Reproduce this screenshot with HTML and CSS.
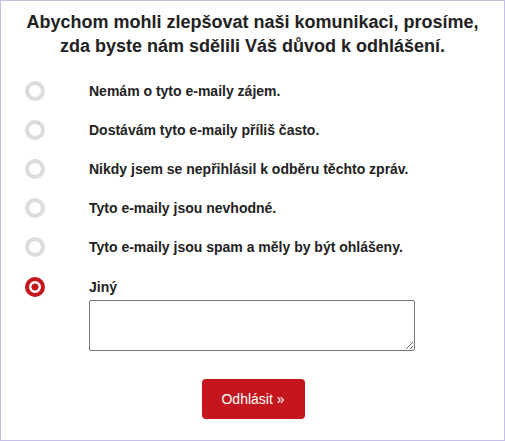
FILE: index.html
```html
<!DOCTYPE html>
<html lang="cs">
<head>
<meta charset="utf-8">
<link rel="stylesheet" href="styles.css">
</head>
<body>
<div class="frame">
  <h1 class="title">Abychom mohli zlepšovat naši komunikaci, prosíme, zda byste nám sdělili Váš důvod k odhlášení.</h1>
  <ul class="options">
    <li class="option"><span class="radio"></span><span class="label">Nemám o tyto e-maily zájem.</span></li>
    <li class="option"><span class="radio"></span><span class="label">Dostávám tyto e-maily příliš často.</span></li>
    <li class="option"><span class="radio"></span><span class="label">Nikdy jsem se nepřihlásil k odběru těchto zpráv.</span></li>
    <li class="option"><span class="radio"></span><span class="label">Tyto e-maily jsou nevhodné.</span></li>
    <li class="option"><span class="radio"></span><span class="label">Tyto e-maily jsou spam a měly by být ohlášeny.</span></li>
    <li class="option option-other"><span class="radio checked"></span><span class="label">Jiný</span><textarea class="other-text"></textarea></li>
  </ul>
  <div class="actions"><button class="submit">Odhlásit »</button></div>
</div>
</body>
</html>
```
FILE: styles.css
```css
html, body {
  margin: 0;
  padding: 0;
  background: #fff;
}
.frame {
  box-sizing: border-box;
  width: 505px;
  height: 441px;
  border: 1px solid #c3bfe6;
  padding-top: 9px;
  font-family: "Liberation Sans", Arial, sans-serif;
  color: #222;
}
.title {
  margin: 0;
  padding: 0 24px;
  font-size: 18px;
  line-height: 24px;
  font-weight: bold;
  text-align: center;
  color: #222;
}
.options {
  list-style: none;
  margin: 23px 0 0;
  padding: 0 0 0 24px;
}
.option {
  display: grid;
  grid-template-columns: 20px 1fr;
  column-gap: 44px;
  align-items: center;
  margin-bottom: 19px;
}
.option-other {
  margin-top: 20px;
  margin-bottom: 0;
}
.radio {
  box-sizing: border-box;
  width: 20px;
  height: 20px;
  border: 4px solid #d9dddf;
  border-radius: 50%;
  background: #fff;
}
.radio.checked {
  border-color: #c4161c;
  background: radial-gradient(circle, #c4161c 0 3.3px, #fff 3.8px);
}
.label {
  font-size: 14px;
  font-weight: bold;
  line-height: 20px;
  color: #222;
}
.other-text {
  grid-column: 2;
  box-sizing: border-box;
  width: 326px;
  height: 51px;
  margin: 3px 0 0;
  border: 1px solid #767676;
  border-radius: 2px;
  padding: 2px;
  font-family: "Liberation Sans", Arial, sans-serif;
  font-size: 13px;
}
.actions {
  display: flex;
  justify-content: center;
  margin-top: 28px;
  padding-left: 1px;
}
.submit {
  width: 103px;
  height: 40px;
  border: 0;
  border-radius: 4px;
  background: #c4161c;
  color: #fff;
  font-family: "Liberation Sans", Arial, sans-serif;
  font-size: 14px;
  padding: 0;
}
```
